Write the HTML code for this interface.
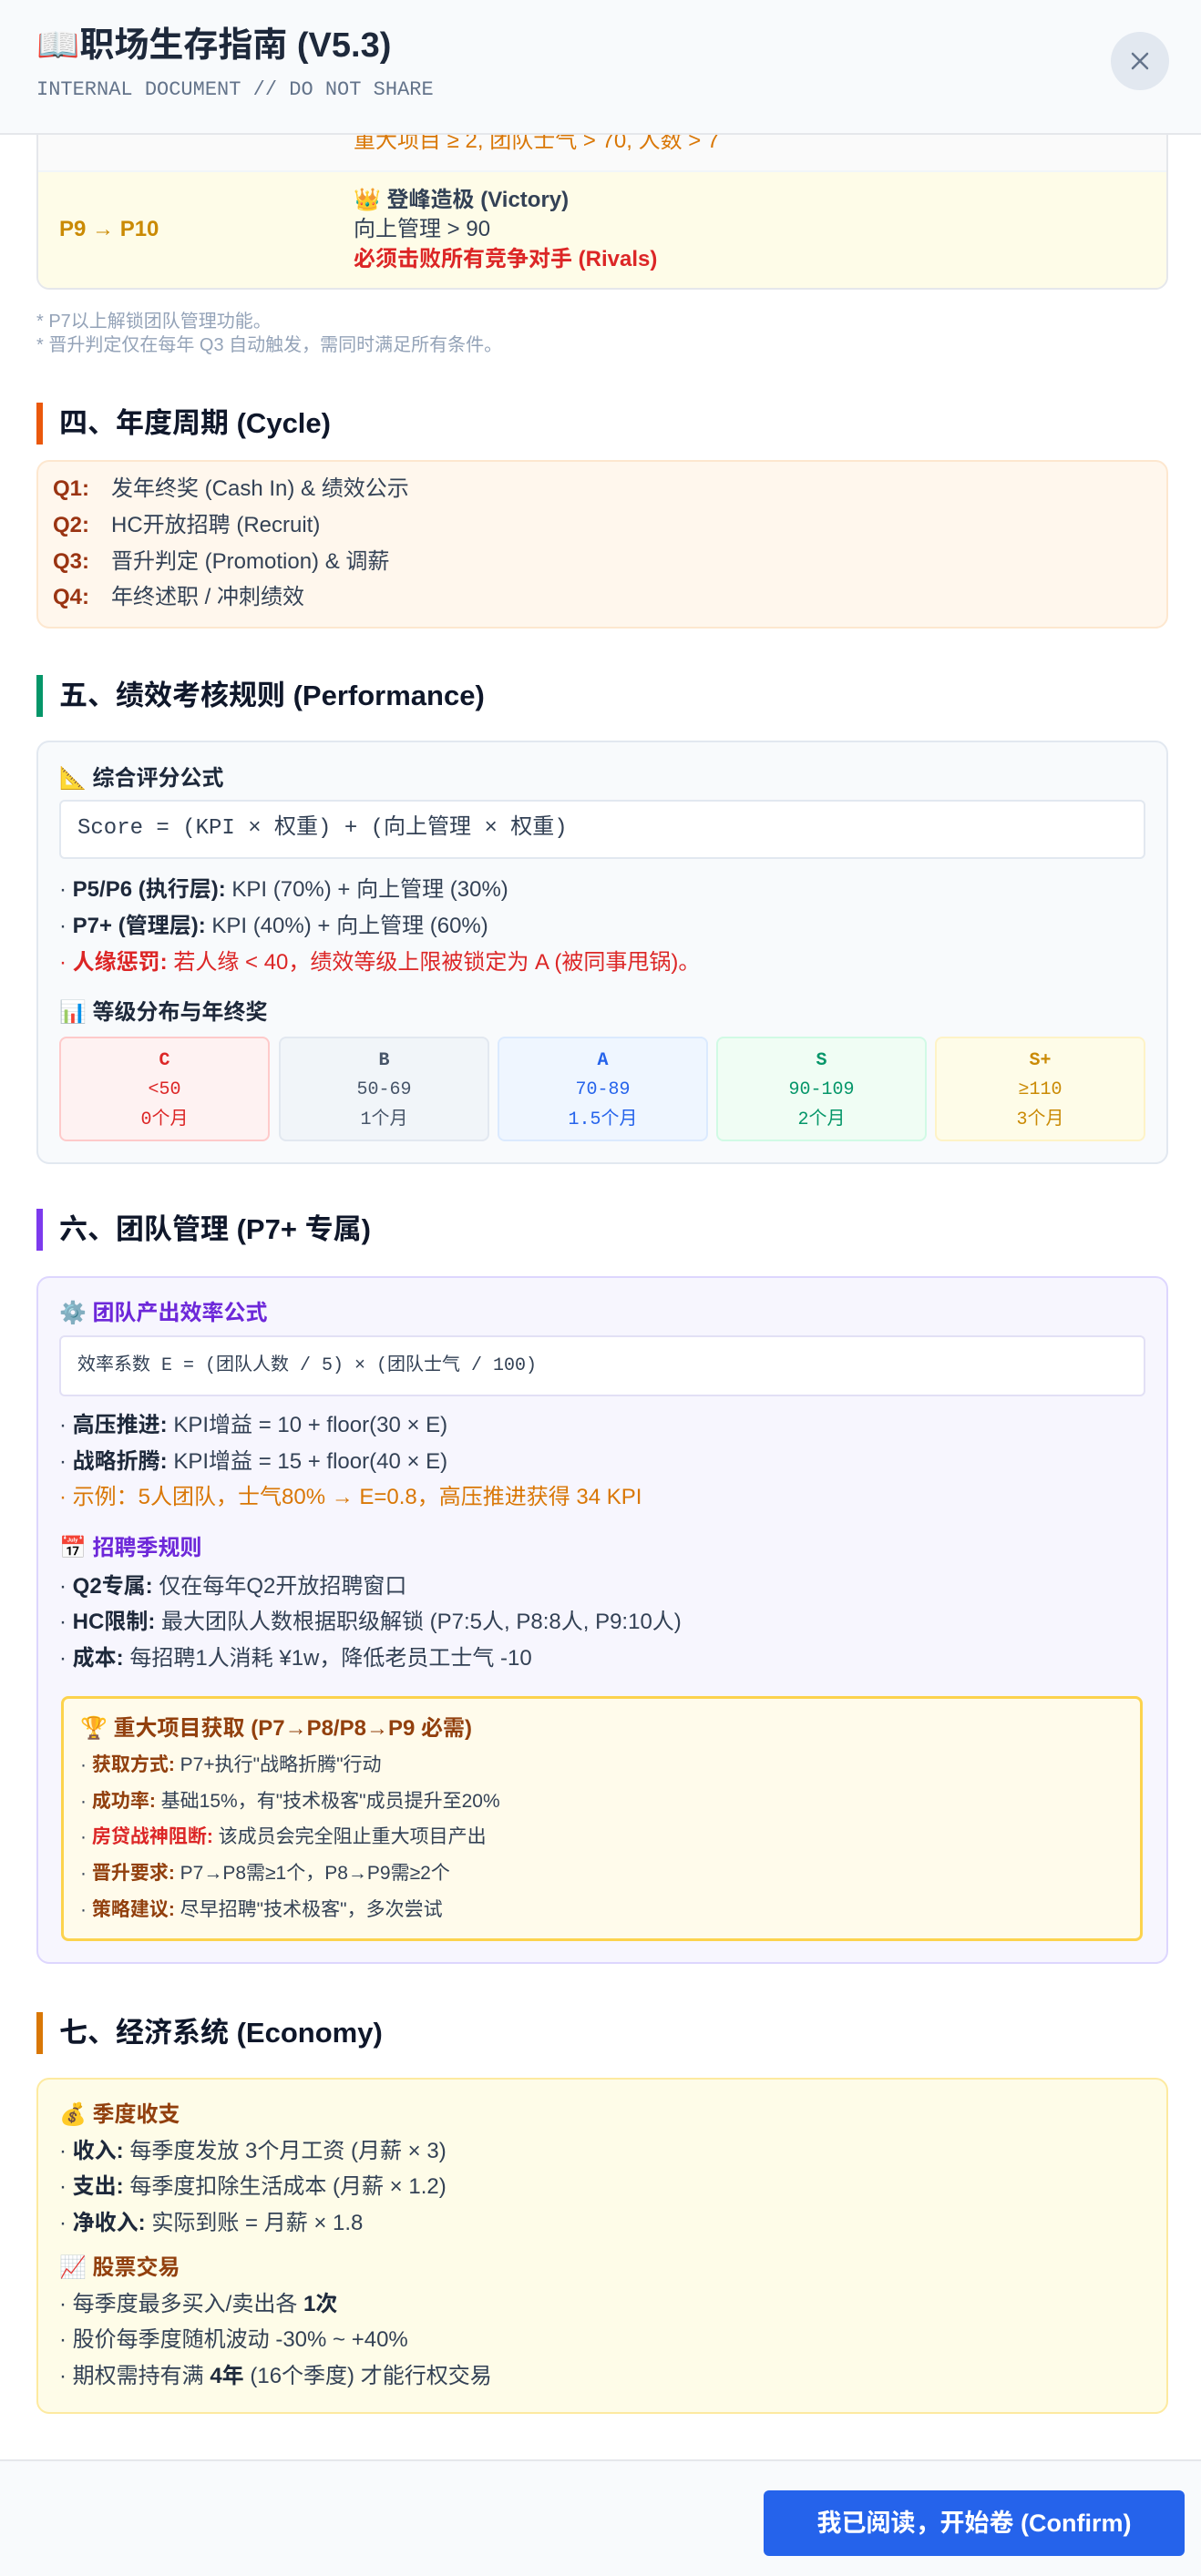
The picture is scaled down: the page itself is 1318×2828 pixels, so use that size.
<!DOCTYPE html>
<html><head><meta charset="utf-8"><style>
*{margin:0;padding:0;box-sizing:border-box}
body{width:1318px;height:2828px;position:relative;background:#fff;font-family:"Liberation Sans","Noto Sans CJK SC",sans-serif;color:#334155;overflow:hidden;font-size:24px}
.a{position:absolute;white-space:nowrap;line-height:40px}
.mono{font-family:"Liberation Mono","Noto Sans CJK SC",monospace}
b{color:#1e293b;font-weight:700}
.card{position:absolute;border-radius:14px}
.h{position:absolute;left:40px;height:46px;border-left:7px solid;padding-left:18px;font-size:31px;font-weight:700;color:#0f172a;line-height:46px}
.g{position:absolute;top:1138px;width:231px;height:115px;border-radius:8px;border:2px solid;text-align:center;font-family:"Liberation Mono","Noto Sans CJK SC",monospace;font-size:20px}
.g div{position:absolute;left:0;right:0;line-height:32px}
</style></head><body>

<!-- table remnant -->
<div class="card" style="left:40px;top:120px;width:1242px;height:198px;border:2px solid #e5e7eb;background:#fafafa;overflow:hidden">
<div style="position:absolute;left:0;top:65px;right:0;bottom:0;background:#fefce8;border-top:2px solid #f1f5f9"></div>
</div>
<div class="a" style="left:388px;top:135px;color:#d97706">重大项目 ≥ 2, 团队士气 &gt; 70, 人数 &gt; 7</div>
<div class="a" style="left:65px;top:232px;color:#ca8a04;font-weight:700">P9 → P10</div>
<div class="a" style="left:388px;top:200px;font-weight:700;color:#334155">👑 登峰造极 (Victory)</div>
<div class="a" style="left:388px;top:232px">向上管理 &gt; 90</div>
<div class="a" style="left:388px;top:265px;color:#dc2626;font-weight:700">必须击败所有竞争对手 (Rivals)</div>

<div class="a" style="left:40px;top:340px;font-size:20px;line-height:26px;color:#94a3b8">* P7以上解锁团队管理功能。</div>
<div class="a" style="left:40px;top:366px;font-size:20px;line-height:26px;color:#94a3b8">* 晋升判定仅在每年 Q3 自动触发，需同时满足所有条件。</div>

<!-- header -->
<div style="position:absolute;left:0;top:0;width:1318px;height:148px;background:#f8fafc;border-bottom:2px solid #e5e7eb"></div>
<div class="a" style="left:40px;top:28px;font-size:38px;line-height:44px;font-weight:700;color:#1e293b">📖职场生存指南 (V5.3)</div>
<div class="a mono" style="left:40px;top:84px;font-size:22px;line-height:30px;color:#64748b">INTERNAL DOCUMENT // DO NOT SHARE</div>
<div style="position:absolute;left:1219px;top:35px;width:64px;height:64px;border-radius:50%;background:#e2e8f0"></div>
<svg style="position:absolute;left:1239px;top:55px" width="24" height="24" viewBox="0 0 24 24"><path d="M4 4L20 20M20 4L4 20" stroke="#64748b" stroke-width="2.5" stroke-linecap="round"/></svg>

<!-- section 4 -->
<div class="h" style="top:442px;border-color:#ea580c">四、年度周期 (Cycle)</div>
<div class="card" style="left:40px;top:505px;width:1242px;height:185px;background:#fff7ed;border:2px solid #fde7cf"></div>
<div class="a" style="left:58px;top:517px;color:#9a3412;font-weight:700">Q1:</div><div class="a" style="left:122px;top:517px">发年终奖 (Cash In) &amp; 绩效公示</div>
<div class="a" style="left:58px;top:557px;color:#9a3412;font-weight:700">Q2:</div><div class="a" style="left:122px;top:557px">HC开放招聘 (Recruit)</div>
<div class="a" style="left:58px;top:597px;color:#9a3412;font-weight:700">Q3:</div><div class="a" style="left:122px;top:597px">晋升判定 (Promotion) &amp; 调薪</div>
<div class="a" style="left:58px;top:636px;color:#9a3412;font-weight:700">Q4:</div><div class="a" style="left:122px;top:636px">年终述职 / 冲刺绩效</div>

<!-- section 5 -->
<div class="h" style="top:741px;border-color:#059669">五、绩效考核规则 (Performance)</div>
<div class="card" style="left:40px;top:813px;width:1242px;height:465px;background:#f8fafc;border:2px solid #e2e8f0"></div>
<div class="a" style="left:65px;top:835px;font-weight:700;color:#1e293b">📐 综合评分公式</div>
<div style="position:absolute;left:65px;top:878px;width:1192px;height:65px;background:#fff;border:2px solid #e2e8f0;border-radius:6px"></div>
<div class="a mono" style="left:85px;top:890px;color:#334155">Score = (KPI × 权重) + (向上管理 × 权重)</div>
<div class="a" style="left:65px;top:957px">· <b>P5/P6 (执行层):</b> KPI (70%) + 向上管理 (30%)</div>
<div class="a" style="left:65px;top:997px">· <b>P7+ (管理层):</b> KPI (40%) + 向上管理 (60%)</div>
<div class="a" style="left:65px;top:1037px;color:#dc2626">· <b style="color:#dc2626">人缘惩罚:</b> 若人缘 &lt; 40，绩效等级上限被锁定为 A (被同事甩锅)。</div>
<div class="a" style="left:65px;top:1092px;font-weight:700;color:#1e293b">📊 等级分布与年终奖</div>
<div class="g" style="left:65px;background:#fef2f2;border-color:#fecaca;color:#dc2626"><div style="top:9px;font-weight:700">C</div><div style="top:41px">&lt;50</div><div style="top:74px">0个月</div></div>
<div class="g" style="left:306px;background:#f1f5f9;border-color:#e2e8f0;color:#475569"><div style="top:9px;font-weight:700">B</div><div style="top:41px">50-69</div><div style="top:74px">1个月</div></div>
<div class="g" style="left:546px;background:#eff6ff;border-color:#dbeafe;color:#2563eb"><div style="top:9px;font-weight:700">A</div><div style="top:41px">70-89</div><div style="top:74px">1.5个月</div></div>
<div class="g" style="left:786px;background:#f0fdf4;border-color:#d1fae5;color:#059669"><div style="top:9px;font-weight:700">S</div><div style="top:41px">90-109</div><div style="top:74px">2个月</div></div>
<div class="g" style="left:1026px;background:#fefce8;border-color:#fef3c7;color:#ca8a04"><div style="top:9px;font-weight:700">S+</div><div style="top:41px">≥110</div><div style="top:74px">3个月</div></div>

<!-- section 6 -->
<div class="h" style="top:1327px;border-color:#7c3aed">六、团队管理 (P7+ 专属)</div>
<div class="card" style="left:40px;top:1401px;width:1242px;height:755px;background:#f7f6fe;border:2px solid #ddd6fe"></div>
<div class="a" style="left:65px;top:1422px;font-weight:700;color:#6d28d9">⚙️ 团队产出效率公式</div>
<div style="position:absolute;left:65px;top:1466px;width:1192px;height:67px;background:#fff;border:2px solid #e2e0f5;border-radius:6px"></div>
<div class="a mono" style="left:85px;top:1480px;font-size:20px">效率系数 E = (团队人数 / 5) × (团队士气 / 100)</div>
<div class="a" style="left:65px;top:1545px">· <b>高压推进:</b> KPI增益 = 10 + floor(30 × E)</div>
<div class="a" style="left:65px;top:1585px">· <b>战略折腾:</b> KPI增益 = 15 + floor(40 × E)</div>
<div class="a" style="left:65px;top:1624px;color:#d97706">· 示例：5人团队，士气80% → E=0.8，高压推进获得 34 KPI</div>
<div class="a" style="left:65px;top:1680px;font-weight:700;color:#6d28d9">📅 招聘季规则</div>
<div class="a" style="left:65px;top:1722px">· <b>Q2专属:</b> 仅在每年Q2开放招聘窗口</div>
<div class="a" style="left:65px;top:1761px">· <b>HC限制:</b> 最大团队人数根据职级解锁 (P7:5人, P8:8人, P9:10人)</div>
<div class="a" style="left:65px;top:1801px">· <b>成本:</b> 每招聘1人消耗 ¥1w，降低老员工士气 -10</div>
<div style="position:absolute;left:67px;top:1862px;width:1187px;height:269px;background:#fffbeb;border:3px solid #fcd34d;border-radius:8px"></div>
<div class="a" style="left:88px;top:1878px;font-weight:700;color:#92400e">🏆 重大项目获取 (P7→P8/P8→P9 必需)</div>
<div class="a" style="left:88px;top:1918px;font-size:21px">· <b style="color:#92400e">获取方式:</b> P7+执行"战略折腾"行动</div>
<div class="a" style="left:88px;top:1958px;font-size:21px">· <b style="color:#92400e">成功率:</b> 基础15%，有"技术极客"成员提升至20%</div>
<div class="a" style="left:88px;top:1997px;font-size:21px">· <b style="color:#dc2626">房贷战神阻断:</b> 该成员会完全阻止重大项目产出</div>
<div class="a" style="left:88px;top:2037px;font-size:21px">· <b style="color:#92400e">晋升要求:</b> P7→P8需≥1个，P8→P9需≥2个</div>
<div class="a" style="left:88px;top:2077px;font-size:21px">· <b style="color:#92400e">策略建议:</b> 尽早招聘"技术极客"，多次尝试</div>

<!-- section 7 -->
<div class="h" style="top:2209px;border-color:#d97706">七、经济系统 (Economy)</div>
<div class="card" style="left:40px;top:2281px;width:1242px;height:369px;background:#fefce8;border:2px solid #fdeaa0"></div>
<div class="a" style="left:65px;top:2302px;font-weight:700;color:#92400e">💰 季度收支</div>
<div class="a" style="left:65px;top:2342px">· <b>收入:</b> 每季度发放 3个月工资 (月薪 × 3)</div>
<div class="a" style="left:65px;top:2381px">· <b>支出:</b> 每季度扣除生活成本 (月薪 × 1.2)</div>
<div class="a" style="left:65px;top:2421px">· <b>净收入:</b> 实际到账 = 月薪 × 1.8</div>
<div class="a" style="left:65px;top:2470px;font-weight:700;color:#92400e">📈 股票交易</div>
<div class="a" style="left:65px;top:2510px">· 每季度最多买入/卖出各 <b>1次</b></div>
<div class="a" style="left:65px;top:2549px">· 股价每季度随机波动 -30% ~ +40%</div>
<div class="a" style="left:65px;top:2589px">· 期权需持有满 <b>4年</b> (16个季度) 才能行权交易</div>

<!-- footer -->
<div style="position:absolute;left:0;top:2700px;width:1318px;height:128px;background:#f8fafc;border-top:2px solid #e5e7eb"></div>
<div style="position:absolute;left:838px;top:2734px;width:462px;height:72px;background:#2563eb;border-radius:6px;color:#fff;font-weight:700;font-size:27px;line-height:72px;text-align:center">我已阅读，开始卷 (Confirm)</div>
</body></html>
